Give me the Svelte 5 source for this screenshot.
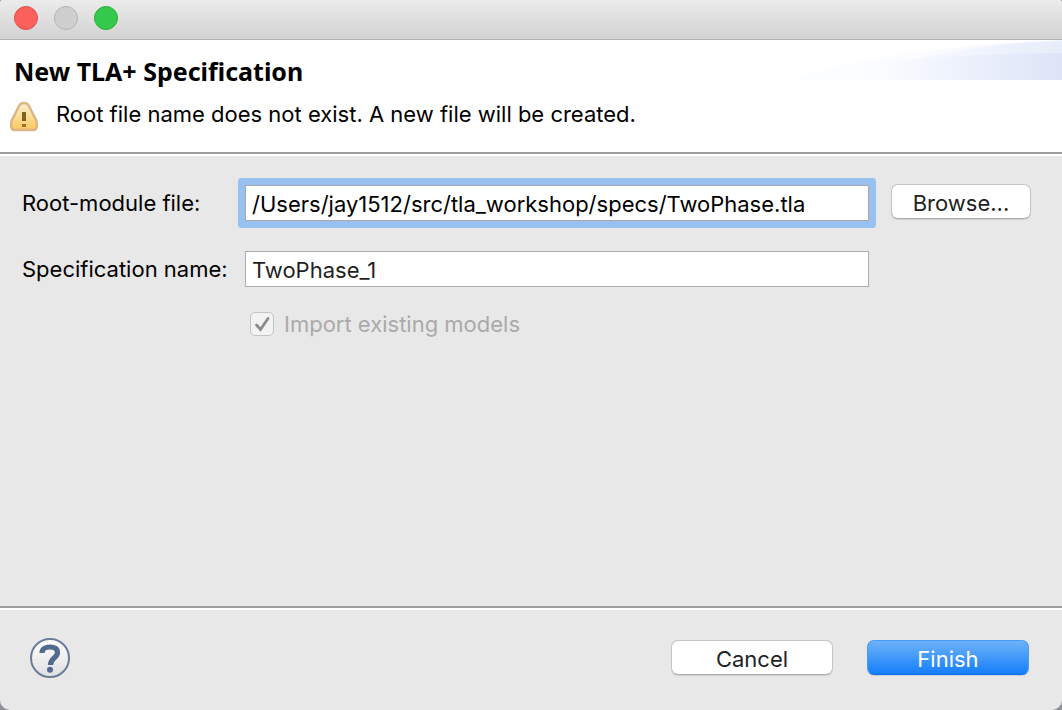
<script>
  let rootFile = $state('/Users/jay1512/src/tla_workshop/specs/TwoPhase.tla');
  let specName = $state('TwoPhase_1');
</script>

<main class="dialog">
  <div class="titlebar">
    <button class="light close" aria-label="Close"></button>
    <button class="light minimize" aria-label="Minimize" disabled></button>
    <button class="light zoom" aria-label="Zoom"></button>
  </div>

  <header class="banner">
    <svg class="swoosh" viewBox="0 0 280 40" aria-hidden="true">
      <defs>
        <linearGradient id="fade-back" x1="0" x2="1">
          <stop offset="0" stop-color="#fdfeff" />
          <stop offset="0.6" stop-color="#fafbff" />
          <stop offset="1" stop-color="#f1f5fd" />
        </linearGradient>
        <linearGradient id="fade-middle" gradientUnits="userSpaceOnUse" x1="90" x2="280" y1="0" y2="0">
          <stop offset="0" stop-color="#fafcff" />
          <stop offset="0.5" stop-color="#f1f5fd" />
          <stop offset="1" stop-color="#e6edfa" />
        </linearGradient>
        <linearGradient id="fade-front" gradientUnits="userSpaceOnUse" x1="90" x2="280" y1="0" y2="0">
          <stop offset="0" stop-color="#fcfdff" />
          <stop offset="0.4" stop-color="#eff3fd" />
          <stop offset="1" stop-color="#dce4f6" />
        </linearGradient>
      </defs>
      <path d="M5 40C70 19 150 6 280 0V40Z" fill="url(#fade-back)" />
      <path d="M90 24C150 20 190 3 280 1V40H90Z" fill="url(#fade-middle)" />
      <path d="M90 24C140 18 190 14 280 13V40H90Z" fill="url(#fade-front)" />
    </svg>
    <h1>New TLA+ Specification</h1>
    <div class="message">
      <svg class="warning" viewBox="0 0 28 32" aria-hidden="true">
        <defs>
          <linearGradient id="amber" x1="0" x2="0" y1="0" y2="1">
            <stop offset="0" stop-color="#fff2d0" />
            <stop offset="0.5" stop-color="#fbdc96" />
            <stop offset="1" stop-color="#ffc95c" />
          </linearGradient>
        </defs>
        <path d="M14 3C16.500 3 18 4 19 6L26 20C27 23 27 26 26.500 28C26 29.500 25 30 23 30H5C3 30 2 29.500 1.500 28C1 26 1 23 2 20L9 6C10 4 11.500 3 14 3Z" fill="url(#amber)" stroke="#ddb585" stroke-width="2.400" />
        <path d="M12 12h4v9h-4z" fill="#86601f" />
        <path d="M12 24h4v3h-4z" fill="#9c732f" />
      </svg>
      <p>Root file name does not exist. A new file will be created.</p>
    </div>
  </header>

  <form class="fields" id="spec-form" onsubmit={(e) => e.preventDefault()}>
    <label for="root-file">Root-module file:</label>
    <input class="text focused" id="root-file" type="text" bind:value={rootFile} />
    <button class="push browse" type="button">Browse...</button>

    <label for="spec-name">Specification name:</label>
    <input class="text" id="spec-name" type="text" bind:value={specName} />

    <label class="import">
      <input type="checkbox" checked disabled />
      <svg class="tick" viewBox="0 0 24 24" aria-hidden="true">
        <path d="M6.500 13L10.500 17.500L18 6.500" fill="none" stroke="#8b8b8b" stroke-width="2.800" stroke-linecap="round" />
      </svg>
      <span>Import existing models</span>
    </label>
  </form>

  <footer class="actions">
    <button class="help" aria-label="Help">
      <svg viewBox="0 0 40 40" aria-hidden="true">
        <defs>
          <linearGradient id="disc" x1="0" x2="0" y1="0" y2="1">
            <stop offset="0" stop-color="#ffffff" />
            <stop offset="1" stop-color="#dfdfdf" />
          </linearGradient>
        </defs>
        <circle cx="20" cy="20" r="19" fill="url(#disc)" stroke="#6b7c98" stroke-width="2" />
        <path d="M12 15C12 11 15 9 20 9C25 9 27.500 11 27.500 14.500C27.500 20 20.500 19.500 20.500 27" fill="none" stroke="#526a8e" stroke-width="5.200" />
        <circle cx="20" cy="31.800" r="3" fill="#526a8e" />
      </svg>
    </button>
    <button class="push wide" type="button">Cancel</button>
    <button class="push wide primary" type="submit" form="spec-form">Finish</button>
  </footer>
</main>

<style>
  :global(body) {
    margin: 0;
    background: #8d9095;
  }

  .dialog {
    box-sizing: border-box;
    min-height: 100vh;
    display: flex;
    flex-direction: column;
    overflow: hidden;
    border-radius: 3px 3px 10px 10px;
    background: #e8e8e8;
    color: #000;
    font-family: Inter, "Liberation Sans", sans-serif;
    font-size: 22px;
    line-height: 28px;
  }

  button,
  input {
    box-sizing: border-box;
    margin: 0;
    font: inherit;
  }

  .titlebar {
    box-sizing: border-box;
    height: 40px;
    display: flex;
    align-items: flex-start;
    gap: 16px;
    padding: 6px 14px;
    border-bottom: 1px solid #b0b0b0;
    background: linear-gradient(#ebebeb, #d2d2d2);
  }

  .light {
    width: 24px;
    height: 24px;
    padding: 0;
    border: 1px solid;
    border-radius: 50%;
  }

  .close {
    border-color: #e2504c;
    background: #fc605c;
  }

  .minimize {
    border-color: #b3b3b3;
    background: #cfcfcf;
  }

  .zoom {
    border-color: #2aae3a;
    background: #34c94a;
  }

  .banner {
    position: relative;
    box-sizing: border-box;
    height: 116px;
    padding: 17px 10px 0;
    border-bottom: 2px solid #fff;
    background: #fff;
    box-shadow: inset 0 -2px #9e9e9e;
  }

  .swoosh {
    position: absolute;
    top: 0;
    right: 0;
    width: 280px;
    height: 40px;
  }

  h1 {
    position: relative;
    margin: 0 4px;
    font-family: "Noto Sans", sans-serif;
    font-size: 25px;
    line-height: 28px;
    font-weight: 700;
  }

  .message {
    display: flex;
    gap: 18px;
    padding-top: 15px;
  }

  .warning {
    flex: none;
    width: 28px;
    height: 32px;
  }

  p {
    margin: 0;
  }

  .fields {
    flex: 1;
    display: grid;
    grid-template-columns: 208px 1fr auto;
    grid-template-rows: 66px 59px 28px;
    align-items: start;
    column-gap: 15px;
    padding: 29px 31px 30px 22px;
    border-bottom: 2px solid #fff;
    box-shadow: inset 0 -2px #9e9e9e;
  }

  .fields > label {
    padding-top: 4px;
  }

  .text {
    width: 100%;
    height: 36px;
    padding: 2px 6px 0;
    border: 1px solid #adadad;
    border-radius: 0;
    outline: none;
    background: #fff;
    color: #1f1f1f;
  }

  .focused {
    color: #000;
    border-color: #a8a8a8;
    border-radius: 1px;
    box-shadow: 0 0 0 7px #97c1f0;
  }

  .push {
    height: 35px;
    padding: 2px 0 0;
    border: 1px solid #c4c4c4;
    border-bottom-color: #acacac;
    border-radius: 7px;
    background: #fff;
    color: #222;
    box-shadow: 0 1px 1px #d0d0d0;
  }

  .browse {
    width: 140px;
    margin: -1px 0 0 7px;
  }

  .fields > .import {
    grid-column: 2;
    display: flex;
    align-items: center;
    gap: 10px;
    padding: 0 0 0 5px;
    color: #aaa;
  }

  .import input {
    appearance: none;
    width: 24px;
    height: 24px;
    border: 1px solid #c4c4c4;
    border-radius: 5px;
    background: #f2f2f2;
  }

  .tick {
    width: 24px;
    height: 24px;
    margin-left: -34px;
  }

  .actions {
    box-sizing: border-box;
    height: 100px;
    display: flex;
    align-items: flex-start;
    gap: 34px;
    padding: 30px 33px 0 30px;
  }

  .help {
    width: 40px;
    height: 40px;
    margin: -2px auto 0 0;
    padding: 0;
    border: 0;
    background: none;
  }

  .help svg {
    display: block;
    width: 40px;
    height: 40px;
  }

  .wide {
    width: 162px;
  }

  .primary {
    border-color: #4a9cf0;
    border-bottom-color: #1068f0;
    background: linear-gradient(#6db3f8, #157efb);
    color: #fff;
  }
</style>
